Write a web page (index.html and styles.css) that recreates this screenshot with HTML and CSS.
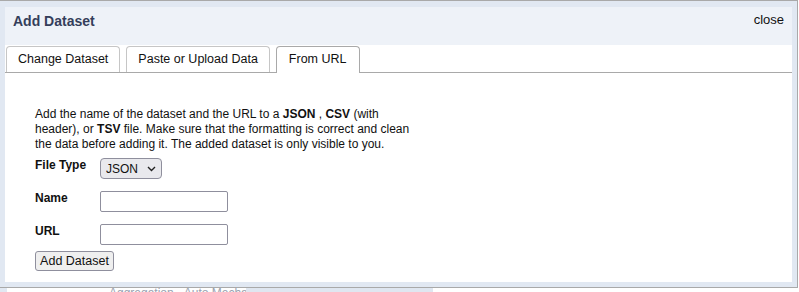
FILE: index.html
```html
<!DOCTYPE html>
<html lang="en">
<head>
    <meta charset="UTF-8">
    <meta name="viewport" content="width=device-width, initial-scale=1.0">
    <title>Add Dataset</title>
    <link rel="stylesheet" href="styles.css">
</head>
<body>
    <div class="dialog">
        <div class="panel">
            <div class="header">
                <span class="title">Add Dataset</span>
                <a class="close" href="#">close</a>
            </div>

            <ul class="tabs">
                <li>Change Dataset</li>
                <li>Paste or Upload Data</li>
                <li class="active">From URL</li>
            </ul>

            <div class="tab-body">
                <p class="intro">Add the name of the dataset and the URL to a <b>JSON</b> , <b>CSV</b> (with header), or <b>TSV</b> file. Make sure that the formatting is correct and clean the data before adding it. The added dataset is only visible to you.</p>

                <div class="form-grid">
                    <label for="fileType">File Type</label>
                    <span class="select-wrap">
                        <select id="fileType" class="type-select">
                            <option>JSON</option>
                            <option>CSV</option>
                            <option>TSV</option>
                        </select>
                        <svg class="chevron" width="9" height="6" viewBox="0 0 9 6">
                            <path d="M1 1 L4.5 4.5 L8 1" fill="none" stroke="#222" stroke-width="1.4"/>
                        </svg>
                    </span>

                    <label for="dsName">Name</label>
                    <input type="text" id="dsName" class="text-input">

                    <label for="dsUrl">URL</label>
                    <input type="text" id="dsUrl" class="text-input">
                </div>

                <button class="add-btn">Add Dataset</button>
            </div>
        </div>
    </div>

    <div class="underlay">
        <span class="underlay-edge"></span>
        <span class="underlay-text">Aggregation - Auto Mechanic</span>
        <span class="underlay-box"></span>
    </div>
</body>
</html>
```

FILE: styles.css
```css
body {
    margin: 0;
    width: 799px;
    height: 292px;
    overflow: hidden;
    background: white;
    font-family: "Liberation Sans", Arial, sans-serif;
    color: #111;
}

.dialog {
    width: 798px;
    height: 288px;
    box-sizing: border-box;
    background: #e1e8f2;
    border: 1px solid #a9a9a9;
    border-left: none;
    padding: 6px 5px 5px 5px;
}

.panel {
    height: 275px;
    background: white;
}

.header {
    height: 38px;
    box-sizing: border-box;
    background: #eef2f8;
    display: flex;
    justify-content: space-between;
    align-items: flex-start;
    padding: 6px 8px 0 8px;
}

.title {
    font-size: 14px;
    line-height: 16px;
    font-weight: bold;
    color: #343e5b;
}

.close {
    font-size: 13px;
    line-height: 16px;
    margin-top: -1px;
    color: #111;
    text-decoration: none;
}

.tabs {
    list-style-type: none;
    margin: 1px 0 0 0;
    padding: 0 0 0 1px;
    display: flex;
    gap: 6px;
    border-bottom: 1px solid #a9a9a9;
    height: 26px;
}

.tabs li {
    height: 26px;
    box-sizing: border-box;
    padding: 0 11px;
    line-height: 25px;
    font-size: 12.5px;
    border: 1px solid #c6c6c6;
    border-bottom: none;
    border-radius: 4px 4px 0 0;
    background: white;
}

.tabs li.active {
    height: 27px;
    padding: 0 12px;
    border-color: #a9a9a9;
    position: relative;
    z-index: 1;
}

.tab-body {
    padding: 34px 30px 0 30px;
}

.intro {
    width: 388px;
    margin: 0 0 6px 0;
    font-size: 12px;
    line-height: 15px;
}

.form-grid {
    display: grid;
    grid-template-columns: 65px auto;
    row-gap: 12px;
    justify-items: start;
    align-items: start;
}

.form-grid label {
    font-size: 12px;
    line-height: 15px;
    font-weight: bold;
}

.select-wrap {
    position: relative;
    display: block;
    height: 21px;
}

.type-select {
    appearance: none;
    width: 62px;
    height: 21px;
    box-sizing: border-box;
    margin: 0;
    padding: 0 0 0 5px;
    background: #e9e9ed;
    border: 1px solid #8f8f9d;
    border-radius: 4px;
    color: #111;
    font-family: "Liberation Sans", Arial, sans-serif;
    font-size: 12px;
}

.chevron {
    position: absolute;
    left: 47px;
    top: 8px;
    pointer-events: none;
}

.text-input {
    width: 128px;
    height: 21px;
    box-sizing: border-box;
    margin: 0;
    border: 1px solid #8f8f9d;
    border-radius: 2px;
    font-family: "Liberation Sans", Arial, sans-serif;
    font-size: 13px;
}

.add-btn {
    display: block;
    margin-top: 6px;
    width: 79px;
    height: 20px;
    padding: 0;
    white-space: nowrap;
    background: #efefef;
    border: 1px solid #8f8f9d;
    border-radius: 3px;
    color: #111;
    font-family: "Liberation Sans", Arial, sans-serif;
    font-size: 12.5px;
}

.underlay {
    height: 4px;
    overflow: hidden;
    position: relative;
}

.underlay-edge {
    position: absolute;
    left: 0;
    top: 0;
    width: 7px;
    height: 4px;
    background: #e1e8f2;
}

.underlay-text {
    position: absolute;
    left: 109px;
    top: 0;
    font-size: 12px;
    line-height: 11px;
    color: #9aa2b0;
}

.underlay-box {
    position: absolute;
    left: 246px;
    top: 0;
    width: 187px;
    height: 4px;
    background: #dfe6f0;
}
```
